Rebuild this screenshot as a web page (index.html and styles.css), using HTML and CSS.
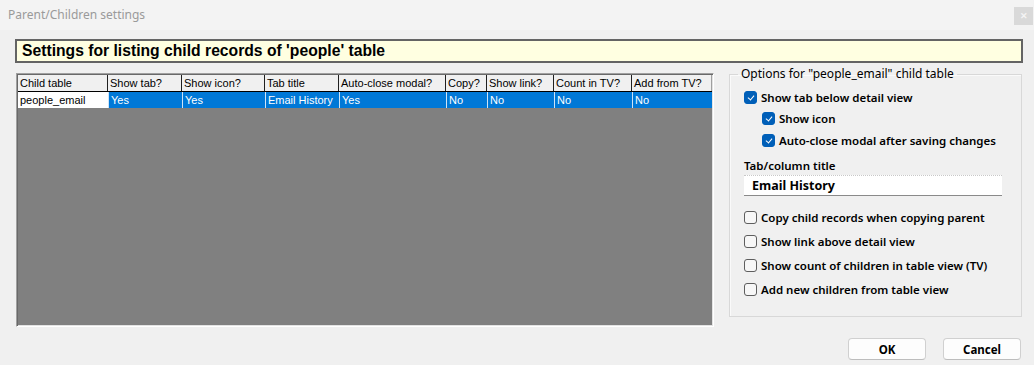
FILE: index.html
```html
<!DOCTYPE html>
<html>
<head>
<meta charset="utf-8">
<link rel="stylesheet" href="styles.css">
</head>
<body>
<div class="window">
  <div class="titlebar">
    <span class="title">Parent/Children settings</span>
    <span class="close">&#x2715;</span>
  </div>
  <div class="content">
    <div class="headline">Settings for listing child records of 'people' table</div>
    <div class="main">
      <div class="grid">
        <div class="row head">
          <div class="cell">Child table</div>
          <div class="cell">Show tab?</div>
          <div class="cell">Show icon?</div>
          <div class="cell">Tab title</div>
          <div class="cell">Auto-close modal?</div>
          <div class="cell">Copy?</div>
          <div class="cell">Show link?</div>
          <div class="cell">Count in TV?</div>
          <div class="cell">Add from TV?</div>
        </div>
        <div class="row data">
          <div class="cell first">people_email</div>
          <div class="cell sel">Yes</div>
          <div class="cell sel">Yes</div>
          <div class="cell sel">Email History</div>
          <div class="cell sel">Yes</div>
          <div class="cell sel">No</div>
          <div class="cell sel">No</div>
          <div class="cell sel">No</div>
          <div class="cell sel">No</div>
        </div>
      </div>
      <fieldset class="group">
        <legend>Options for "people_email" child table</legend>
        <div class="opts-top">
          <label class="opt"><span class="cb on"></span>Show tab below detail view</label>
          <label class="opt sub"><span class="cb on"></span>Show icon</label>
          <label class="opt sub third"><span class="cb on"></span>Auto-close modal after saving changes</label>
        </div>
        <div class="field-label">Tab/column title</div>
        <div class="input">Email History</div>
        <div class="opts-bottom">
          <label class="opt"><span class="cb"></span>Copy child records when copying parent</label>
          <label class="opt"><span class="cb"></span>Show link above detail view</label>
          <label class="opt"><span class="cb"></span>Show count of children in table view (TV)</label>
          <label class="opt"><span class="cb"></span>Add new children from table view</label>
        </div>
      </fieldset>
    </div>
    <div class="buttons">
      <button class="btn">OK</button>
      <button class="btn">Cancel</button>
    </div>
  </div>
</div>
</body>
</html>
```

FILE: styles.css
```css
html, body {
  margin: 0;
  padding: 0;
  background: #f0f0f0;
}
.window {
  width: 1034px;
  height: 365px;
  background: #f0f0f0;
  font-family: "Noto Sans", "Open Sans", sans-serif;
  overflow: hidden;
}
.titlebar {
  height: 30px;
  background: #f3f3f3;
  display: flex;
  align-items: flex-start;
}
.title {
  margin: 7px 0 0 8px;
  font-size: 12px;
  line-height: 16px;
  color: #9a9a9a;
}
.close {
  margin: 7px 1px 0 auto;
  width: 19px;
  height: 18px;
  background: #d9d9d9;
  color: #f4f4f4;
  font-size: 9px;
  font-weight: bold;
  line-height: 18px;
  text-align: center;
}
.content {
  padding: 9px 0 0 0;
}
.headline {
  margin-left: 15px;
  width: 999px;
  height: 20px;
  border: 2px solid #646464;
  background: #ffffe1;
  font-family: "Liberation Sans", Arial, sans-serif;
  font-weight: bold;
  font-size: 15.7px;
  line-height: 20px;
  padding-left: 5px;
  box-sizing: content-box;
  color: #000;
}
.main {
  display: flex;
  align-items: flex-start;
  margin-top: 3px;
}
.grid {
  margin: 7px 0 0 16px;
  width: 694px;
  height: 250px;
  border: 1px solid;
  border-color: #a0a0a0 #ffffff #ffffff #a0a0a0;
  box-shadow: inset 1px 1px 0 #696969, inset -1px -1px 0 #e3e3e3;
  padding: 1px;
  background: #808080;
  font-family: "Liberation Sans", Arial, sans-serif;
  font-size: 11px;
  box-sizing: content-box;
}
.row {
  display: grid;
  grid-template-columns: 90px 74px 83px 74px 107px 41px 67px 78px 80px;
}
.head {
  height: 16px;
  background: #f0f0f0;
  border-bottom: 1px solid #000;
}
.head .cell {
  border-right: 1px solid #202020;
  line-height: 16px;
  padding-left: 2px;
  color: #000;
  white-space: nowrap;
  overflow: hidden;
}
.head .cell:last-child {
  border-right: 1px solid #a0a0a0;
}
.data {
  height: 16px;
}
.data .cell {
  line-height: 16px;
  padding-left: 2px;
  white-space: nowrap;
  overflow: hidden;
}
.data .first {
  background: #ffffff;
  color: #000;
}
.data .sel {
  background: #0078d7;
  color: #fff;
  border-left: 1px solid #cfe3f6;
}
.group {
  margin: 0 0 0 15px;
  width: 293px;
  height: 251px;
  border: 1px solid #d8d8d8;
  box-shadow: inset 1px 1px 0 #fafafa;
  padding: 5px 0 0 14px;
  box-sizing: border-box;
  font-size: 12px;
  color: #000;
}
.group legend {
  margin-left: -6px;
  padding: 0 3px;
  font-size: 12px;
  line-height: 16px;
}
.opts-top {
  display: flex;
  flex-direction: column;
}
.opt {
  display: flex;
  align-items: center;
  height: 21px;
  font-weight: 600;
  font-size: 11.5px;
  white-space: nowrap;
}
.opt.sub {
  padding-left: 18px;
}
.opt.third {
  margin-top: 1px;
}
.cb {
  width: 13px;
  height: 13px;
  box-sizing: border-box;
  border-radius: 3px;
  border: 1px solid #5e5e5e;
  background: #f7f7f7;
  margin-right: 4px;
  flex: none;
  position: relative;
}
.cb.on {
  background: #005fb8;
  border-color: #005fb8;
}
.cb.on::after {
  content: "";
  position: absolute;
  left: 3.5px;
  top: 2px;
  width: 3px;
  height: 5px;
  border: solid #ffffff;
  border-width: 0 1px 1px 0;
  transform: rotate(40deg);
}
.field-label {
  margin-top: 7px;
  font-size: 11.5px;
  font-weight: 600;
  line-height: 16px;
}
.input {
  margin-top: 1px;
  width: 258px;
  height: 21px;
  box-sizing: border-box;
  background: #ffffff;
  border-top: 1px dotted #c8c8c8;
  border-bottom: 1px solid #8a8a8a;
  padding-left: 8px;
  font-weight: bold;
  font-size: 12.5px;
  line-height: 20px;
}
.opts-bottom {
  margin-top: 9px;
  display: flex;
  flex-direction: column;
}
.opts-bottom .opt {
  height: 24px;
}
.buttons {
  display: flex;
  justify-content: flex-end;
  gap: 17px;
  margin: 11px 13px 0 0;
}
.btn {
  width: 78px;
  height: 22px;
  background: #fdfdfd;
  border: 1px solid #d0d0d0;
  border-bottom-color: #bdbdbd;
  border-radius: 4px;
  font-family: "Noto Sans", sans-serif;
  font-weight: bold;
  font-size: 11.5px;
  color: #000;
  padding: 0;
}
```
